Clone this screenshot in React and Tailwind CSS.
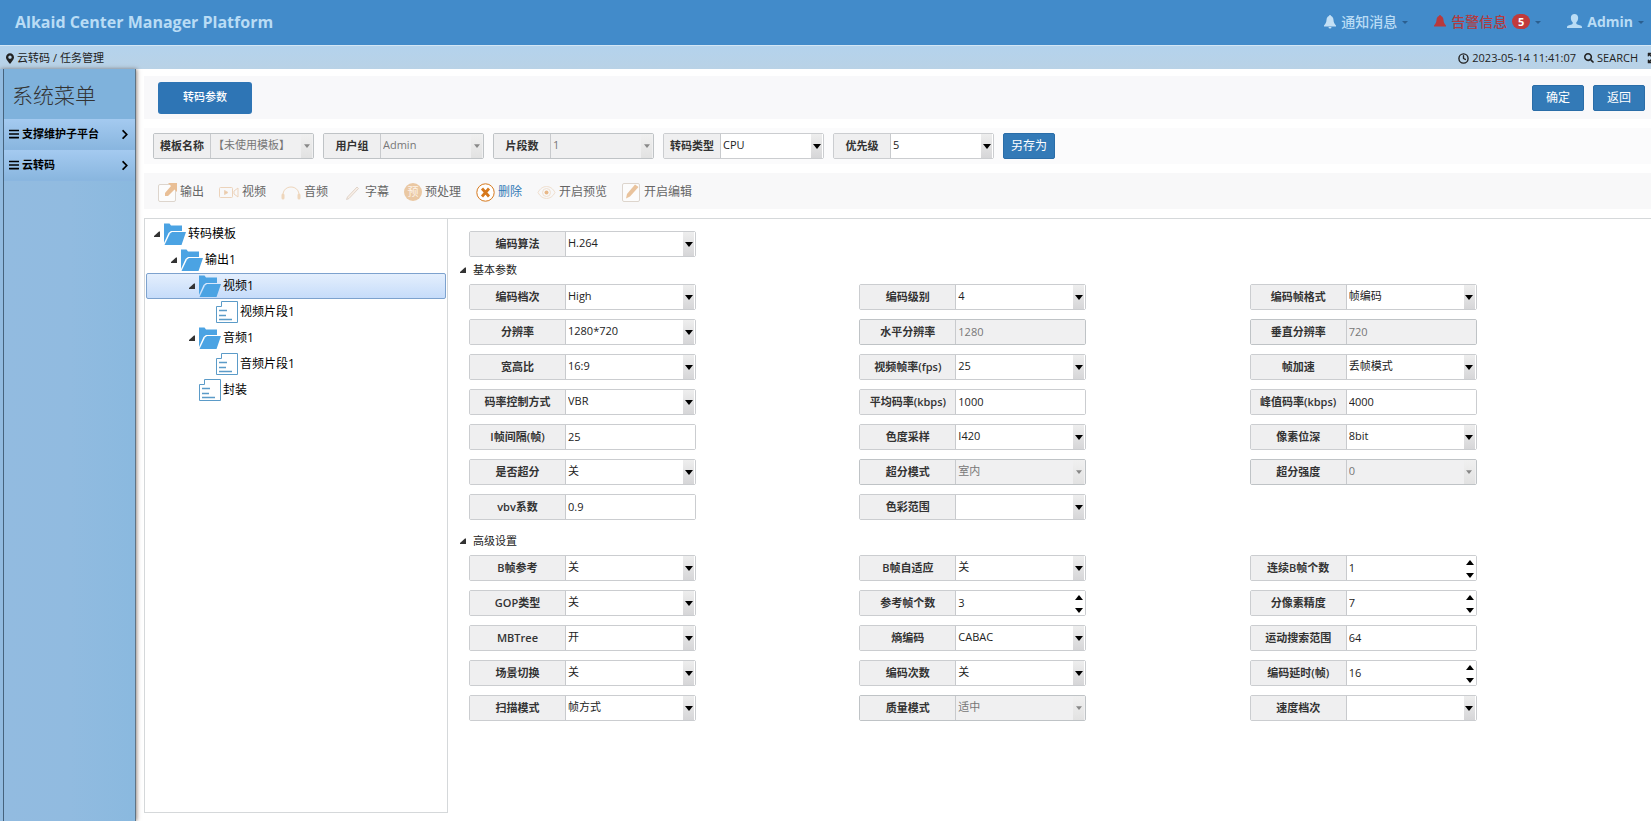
import React from "react";

import clsx from "clsx";

import {
  FaBars,
  FaChevronRight,
  FaExpandArrowsAlt,
  FaMapMarkerAlt,
  FaSearch,
} from "react-icons/fa";

import { Clock } from "lucide-react";

const filters = [
  { id: "tpl", label: "模板名称", value: "【未使用模板】", disabled: true },
  { id: "group", label: "用户组", value: "Admin", disabled: true },
  { id: "segments", label: "片段数", value: "1", disabled: true },
  { id: "type", label: "转码类型", value: "CPU" },
  { id: "priority", label: "优先级", value: "5" },
];

const basicFields = [
  { id: "profile", label: "编码档次", value: "High" },
  { id: "level", label: "编码级别", value: "4" },
  { id: "frameFormat", label: "编码帧格式", value: "帧编码" },
  { id: "resolution", label: "分辨率", value: "1280*720" },
  { id: "width", label: "水平分辨率", value: "1280", kind: "text", disabled: true },
  { id: "height", label: "垂直分辨率", value: "720", kind: "text", disabled: true },
  { id: "aspect", label: "宽高比", value: "16:9" },
  { id: "fps", label: "视频帧率(fps)", value: "25" },
  { id: "frameSpeed", label: "帧加速", value: "丢帧模式" },
  { id: "rateControl", label: "码率控制方式", value: "VBR" },
  { id: "avgRate", label: "平均码率(kbps)", value: "1000", kind: "text" },
  { id: "peakRate", label: "峰值码率(kbps)", value: "4000", kind: "text" },
  { id: "iInterval", label: "I帧间隔(帧)", value: "25", kind: "text" },
  { id: "chroma", label: "色度采样", value: "I420" },
  { id: "bitDepth", label: "像素位深", value: "8bit" },
  { id: "superRes", label: "是否超分", value: "关" },
  { id: "superMode", label: "超分模式", value: "室内", disabled: true },
  { id: "superLevel", label: "超分强度", value: "0", disabled: true },
  { id: "vbv", label: "vbv系数", value: "0.9", kind: "text" },
  { id: "colorRange", label: "色彩范围", value: "" },
];

const advancedFields = [
  { id: "bRef", label: "B帧参考", value: "关" },
  { id: "bAdaptive", label: "B帧自适应", value: "关" },
  { id: "bCount", label: "连续B帧个数", value: "1", kind: "number" },
  { id: "gop", label: "GOP类型", value: "关" },
  { id: "refCount", label: "参考帧个数", value: "3", kind: "number" },
  { id: "subpel", label: "分像素精度", value: "7", kind: "number" },
  { id: "mbtree", label: "MBTree", value: "开" },
  { id: "entropy", label: "熵编码", value: "CABAC" },
  { id: "motion", label: "运动搜索范围", value: "64", kind: "text" },
  { id: "scene", label: "场景切换", value: "关" },
  { id: "passes", label: "编码次数", value: "关" },
  { id: "delay", label: "编码延时(帧)", value: "16", kind: "number" },
  { id: "scan", label: "扫描模式", value: "帧方式" },
  { id: "quality", label: "质量模式", value: "适中", disabled: true },
  { id: "speed", label: "速度档次", value: "" },
];

const tree = [
  { label: "转码模板", indent: "pl-[7px]", folder: true },
  { label: "输出1", indent: "pl-[24px]", folder: true },
  { label: "视频1", indent: "pl-[42px]", folder: true, selected: true },
  { label: "视频片段1", indent: "pl-[59px]" },
  { label: "音频1", indent: "pl-[42px]", folder: true },
  { label: "音频片段1", indent: "pl-[59px]" },
  { label: "封装", indent: "pl-[42px]" },
];

export default function App() {
  return (
    <div className="min-h-screen flex flex-col bg-white overflow-x-hidden text-[#333] font-['Open_Sans','Noto_Sans_CJK_SC',sans-serif]">
      <Header />

      <SubHeader />

      <div className="flex flex-1">
        <Sidebar />

        <main className="flex-1 min-w-0 flex flex-col pt-[7px] pl-2">
          {/* TITLE BAR */}

          <div className="h-[43px] flex items-center justify-between bg-[#f8f8fa] pl-[14px] pr-[6px]">
            <button
              type="button"
              className="h-8 w-[94px] rounded-[3px] bg-[#2e75b5] text-white text-[11px] font-medium"
            >
              转码参数
            </button>

            <div className="flex gap-[9px]">
              <PrimaryButton>确定</PrimaryButton>
              <PrimaryButton>返回</PrimaryButton>
            </div>
          </div>

          {/* FILTERS */}

          <div className="mt-[9px] h-[36px] flex items-center gap-[9px] pl-[9px] bg-[#fbfbfc]">
            {filters.map((item) => (
              <Field
                key={item.id}
                {...item}
                boxClass="w-[161px]"
                labelClass="w-[57px]"
              />
            ))}

            <PrimaryButton>另存为</PrimaryButton>
          </div>

          <Toolbar />

          {/* CONTENT */}

          <div className="mt-[9px] flex flex-1 border-t border-[#d5d8da]">
            <TemplateTree />

            <div className="flex-1 min-w-0 pl-[21px] pr-[11px] pt-3 pb-8">
              <Field
                id="codec"
                label="编码算法"
                value="H.264"
                boxClass="w-[227px]"
                labelClass="w-[96px]"
              />

              <Section title="基本参数" fields={basicFields} />

              <div className="h-2" />

              <Section title="高级设置" fields={advancedFields} />
            </div>
          </div>
        </main>
      </div>
    </div>
  );
}

function Header() {
  return (
    <header className="h-[45px] flex items-center justify-between bg-[#428bca] pl-[15px] pr-[7px] pb-[2px] text-[#b9dcf5]">
      <h1 className="text-base font-bold">Alkaid Center Manager Platform</h1>

      <nav className="flex items-center text-sm font-medium">
        <button type="button" className="flex items-center gap-[5px] mr-[26px]">
          <BellIcon clapper className="w-3 h-[14px] text-[#c4e0f5]" />
          通知消息
          <Caret />
        </button>

        <button
          type="button"
          className="flex items-center gap-[5px] mr-[26px] text-[#b23b3f]"
        >
          <BellIcon className="w-3 h-[14px] text-[#b8393c]" />
          告警信息
          <span className="w-[18px] h-[15px] rounded-full bg-[#c13a3b] text-white text-[11px] leading-[15px] font-bold text-center">
            5
          </span>
          <Caret />
        </button>

        <button type="button" className="flex items-center gap-[5px] font-bold">
          <UserIcon />
          Admin
          <Caret />
        </button>
      </nav>
    </header>
  );
}

function SubHeader() {
  return (
    <div className="h-6 flex items-center justify-between border-t border-[#d3e6f5] bg-linear-to-b from-[#b4d3ed] to-[#b9d2e6] pt-px pl-[6px] text-[11px] text-[#222] overflow-hidden">
      <div className="flex items-center gap-[3px]">
        <FaMapMarkerAlt className="w-2 h-[11px]" />
        <a href="#transcode">云转码</a>
        <span>/</span>
        <a href="#tasks">任务管理</a>
      </div>

      <div className="flex items-center">
        <Clock className="w-[11px] h-[11px] mr-[3px]" strokeWidth={3} />
        <time>2023-05-14 11:41:07</time>
        <a href="#search" className="flex items-center gap-[3px] ml-2">
          <FaSearch className="w-[10px] h-[10px]" />
          SEARCH
        </a>
        <button type="button" aria-label="全屏" className="ml-[9px] -mr-2">
          <FaExpandArrowsAlt className="w-3 h-3" />
        </button>
      </div>
    </div>
  );
}

function Sidebar() {
  return (
    <aside className="w-[136px] shrink-0 flex bg-[#92bbe0] pl-[3px] border-r border-[#5f7485] shadow-[1px_0_4px_rgba(80,60,50,0.6)]">
      <div className="flex-1 border-l border-[#46637d] bg-linear-to-r from-[#92bbe0] via-[#91bbe0] to-[#8ab9df]">
        <h2 className="h-[50px] flex items-center pl-2 pt-1 bg-[#7fb2dc] text-[21px] font-light text-[#333]">
          系统菜单
        </h2>

        <MenuItem label="支撑维护子平台" />
        <MenuItem label="云转码" />
      </div>
    </aside>
  );
}

function MenuItem({ label }) {
  return (
    <a
      href="#menu"
      className="h-[31px] flex items-center pl-[5px] pr-[6px] border-b border-[#8ab6e0] bg-linear-to-b from-[#a4caf0] to-[#89b6df] text-[11px] font-bold text-black"
    >
      <FaBars className="w-[10px] h-3 mr-[3px]" />
      <span className="flex-1">{label}</span>
      <FaChevronRight className="w-2 h-[11px]" />
    </a>
  );
}

function PrimaryButton({ children }) {
  return (
    <button
      type="button"
      className="w-[52px] h-[26px] rounded-[2px] border border-[#2a6da8] bg-[#337ab7] text-white text-xs"
    >
      {children}
    </button>
  );
}

function Toolbar() {
  return (
    <div className="mt-[9px] h-9 flex items-center pt-[2px] pl-[14px] bg-[#f8f8f9] text-xs text-[#666]">
      <Tool label="输出" icon={<ExportIcon />} />
      <Tool label="视频" icon={<VideoIcon />} />
      <Tool label="音频" icon={<HeadphoneIcon />} />
      <Tool label="字幕" icon={<PenIcon />} />
      <Tool
        label="预处理"
        icon={
          <span className="w-[18px] h-[18px] rounded-full bg-[#eac8a3] text-[#fdf3e8] text-[11px] leading-[18px] text-center">
            预
          </span>
        }
      />
      <Tool label="删除" icon={<DeleteIcon />} active />
      <Tool label="开启预览" icon={<EyeIcon />} />
      <Tool label="开启编辑" icon={<EditIcon />} />
    </div>
  );
}

function Tool({ label, icon, active }) {
  return (
    <button
      type="button"
      className={clsx(
        "flex items-center gap-[3px] mr-[15px]",
        active && "text-[#337ab7]",
      )}
    >
      {icon}
      {label}
    </button>
  );
}

function TemplateTree() {
  return (
    <ul className="w-[304px] shrink-0 mb-2 border-x border-b border-[#d5d8da] px-px pt-[2px] text-xs text-black">
      {tree.map((node) => (
        <li
          key={node.label}
          className={clsx(
            "h-[26px] flex items-center border rounded-[2px]",
            node.indent,
            node.selected
              ? "border-[#7da2ce] bg-linear-to-b from-[#e4effd] to-[#c6dcfa]"
              : "border-transparent",
          )}
        >
          <span className="w-[10px] shrink-0">
            {node.folder && <Expander />}
          </span>
          {node.folder ? <FolderIcon /> : <FileIcon />}
          <span className="ml-[2px]">{node.label}</span>
        </li>
      ))}
    </ul>
  );
}

function Section({ title, fields }) {
  return (
    <section>
      <h3 className="h-[27px] -ml-[9px] flex items-center gap-[7px] pb-px text-[11px] text-[#222]">
        <Expander />
        {title}
      </h3>

      <div className="grid grid-cols-3 gap-y-[9px]">
        {fields.map((item) => (
          <Field
            key={item.id}
            {...item}
            boxClass="w-[227px]"
            labelClass="w-[96px]"
          />
        ))}
      </div>
    </section>
  );
}

function Field({
  id,
  label,
  value,
  kind = "select",
  disabled,
  boxClass,
  labelClass,
}) {
  const control = clsx(
    "w-full h-full appearance-none outline-none pl-[2px] pb-px disabled:opacity-100",
    disabled ? "text-[#777]" : "text-[#222]",
  );

  return (
    <div
      className={clsx(
        "h-[26px] flex rounded-[2px] border text-[11px]",
        disabled ? "border-[#bfc3c6]" : "border-[#cbcdd0]",
        boxClass,
      )}
    >
      <label
        htmlFor={id}
        className={clsx(
          "shrink-0 flex items-center justify-center border-r border-[#c8cacd] bg-[#efeff0] font-semibold whitespace-nowrap",
          labelClass,
        )}
      >
        {label}
      </label>

      <div
        className={clsx(
          "relative flex-1 min-w-0",
          disabled ? "bg-[#f0f0f1]" : "bg-white",
        )}
      >
        {kind === "select" && (
          <>
            <select
              id={id}
              defaultValue={value}
              disabled={disabled}
              className={control}
            >
              <option value={value}>{value}</option>
            </select>
            <span
              className={clsx(
                "pointer-events-none absolute inset-y-0 right-px w-[11px] flex items-center justify-center bg-linear-to-b",
                disabled
                  ? "from-[#f0f0f0] to-[#e2e2e2] text-[#888]"
                  : "from-[#eeeeee] to-[#d6d6d8] text-black",
              )}
            >
              <Down small={disabled} />
            </span>
          </>
        )}

        {kind === "text" && (
          <input
            id={id}
            type="text"
            defaultValue={value}
            disabled={disabled}
            className={control}
          />
        )}

        {kind === "number" && <NumberInput id={id} value={value} className={control} />}
      </div>
    </div>
  );
}

function NumberInput({ id, value, className }) {
  const ref = React.useRef(null);

  return (
    <>
      <input
        ref={ref}
        id={id}
        type="number"
        defaultValue={value}
        className={clsx(className, "[appearance:textfield]")}
      />
      <div className="absolute inset-y-0 right-px w-[10px] flex flex-col items-center justify-between pt-1 pb-[2px] bg-white text-black">
        <button
          type="button"
          aria-label="增加"
          onClick={() => ref.current.stepUp()}
        >
          <Down up />
        </button>
        <button
          type="button"
          aria-label="减少"
          onClick={() => ref.current.stepDown()}
        >
          <Down />
        </button>
      </div>
    </>
  );
}

/* ICONS */

function Down({ up, small }) {
  return (
    <svg
      viewBox="0 0 8 5"
      fill="currentColor"
      className={clsx("block", small ? "w-[6px] h-1" : "w-2 h-[5px]")}
    >
      <path d={up ? "M0 5 4 0l4 5z" : "M0 0h8L4 5z"} />
    </svg>
  );
}

function Caret() {
  return (
    <svg
      viewBox="0 0 6 3"
      fill="currentColor"
      className="w-[6px] h-[3px] mt-[2px] text-[#2b5f8f]"
    >
      <path d="M0 0h6L3 3z" />
    </svg>
  );
}

function Expander() {
  return (
    <svg viewBox="0 0 6 6" className="w-[6px] h-[6px]" fill="#333">
      <path d="M5 .5h1V6H0V5z" />
    </svg>
  );
}

function BellIcon({ clapper, className }) {
  return (
    <svg viewBox="0 0 12 14" fill="currentColor" className={className}>
      <path d="M6 0a1 1 0 0 1 1 1c1.600.5 2.300 2 2.500 4 .2 2.500.9 3.800 2.500 5.500v1H0v-1C1.600 8.800 2.300 7.500 2.500 5c.2-2 .9-3.500 2.500-4a1 1 0 0 1 1-1z" />
      {clapper && <path d="M4.500 12h3a1.500 1.500 0 0 1-3 0z" />}
    </svg>
  );
}

function UserIcon() {
  return (
    <svg viewBox="0 0 14 14" fill="currentColor" className="w-[15px] h-[15px]">
      <path d="M7 0c2 0 3.400 1.500 3.400 3.500 0 1.800-.7 3.400-1.700 4.200v1c0 .6.3.8 1 1.100l3 1c1 .4 1.300.9 1.300 1.800v.4H0v-.4c0-.9.3-1.400 1.300-1.800l3-1c.7-.3 1-.5 1-1.100v-1c-1-.8-1.700-2.400-1.700-4.200C3.600 1.500 5 0 7 0z" />
    </svg>
  );
}

function FolderIcon() {
  return (
    <svg viewBox="0 0 22 22" className="w-[22px] h-[22px]" fill="#4ba3e3">
      <path d="M0 .5h5.500L7 2.500h11V8H7l-2.500 2L0 20z" />
      <path d="M6 10.500 8 9h14l-4.500 13H.5z" />
    </svg>
  );
}

function FileIcon() {
  return (
    <svg
      viewBox="0 0 22 22"
      className="w-[22px] h-[22px]"
      fill="#fff"
      stroke="#5b9bc8"
    >
      <path d="M5.500.5h16v21H.5v-16h5z" />
      <path d="M3 9.500h8M3 14.500h7M3 18.500h13" strokeWidth="1.500" />
    </svg>
  );
}

function ExportIcon() {
  return (
    <svg viewBox="0 0 19 19" className="w-[19px] h-[19px]" fill="none">
      <rect x=".5" y="1.500" width="17" height="17" rx="1.500" fill="#fcfcfc" stroke="#ddd5cd" />
      <path d="M10 0h9v9l-2.500-2.500L10 13H7v-3l6-7z" fill="#e9bf96" />
    </svg>
  );
}

function VideoIcon() {
  return (
    <svg
      viewBox="0 0 20 19"
      className="w-5 h-[19px]"
      fill="none"
      stroke="#ecd3bb"
      strokeLinejoin="round"
    >
      <rect x=".5" y="4.500" width="13" height="10" rx="1" />
      <path d="M15 8l4-3v9l-4-3z" />
      <path d="M5.500 7.500v4l3.500-2z" fill="#ecc9a5" />
    </svg>
  );
}

function HeadphoneIcon() {
  return (
    <svg viewBox="0 0 20 19" className="w-5 h-[19px]" fill="none" stroke="#eed6bc">
      <path d="M2 13C1 1 19 1 18 13" />
      <path d="M2 12v3M18 12v3" strokeWidth="3" strokeLinecap="round" />
    </svg>
  );
}

function PenIcon() {
  return (
    <svg viewBox="0 0 19 19" className="w-[19px] h-[19px]" fill="#f8eee6" stroke="#e0d4ca">
      <path d="M3.500 16.500 4.500 14 14 4l1.500 1.500L6 15.500z" />
    </svg>
  );
}

function DeleteIcon() {
  return (
    <svg viewBox="0 0 19 19" className="w-[19px] h-[19px]" fill="none" stroke="#d6781c">
      <circle cx="9.500" cy="9.500" r="8.700" fill="#fff" />
      <path d="m6 5.500 7 8M13 5.500l-7 8" strokeWidth="2.800" />
    </svg>
  );
}

function EyeIcon() {
  return (
    <svg viewBox="0 0 19 19" className="w-[19px] h-[19px]" fill="none" stroke="#f0dfce">
      <path d="M1 9.500c4-8 13-8 17 0-4 8-13 8-17 0z" />
      <circle cx="9.500" cy="9.500" r="4" />
      <circle cx="9.500" cy="9.500" r="2" fill="#e8b888" stroke="none" />
    </svg>
  );
}

function EditIcon() {
  return (
    <svg viewBox="0 0 19 19" className="w-[19px] h-[19px]" fill="none">
      <rect x=".5" y=".5" width="17" height="18" rx="1.500" fill="#fcfcfc" stroke="#ddd5cd" />
      <path d="M4 15.500 5 11l8-9.500L16.500 4 8 13.500z" fill="#e9c39d" />
    </svg>
  );
}
